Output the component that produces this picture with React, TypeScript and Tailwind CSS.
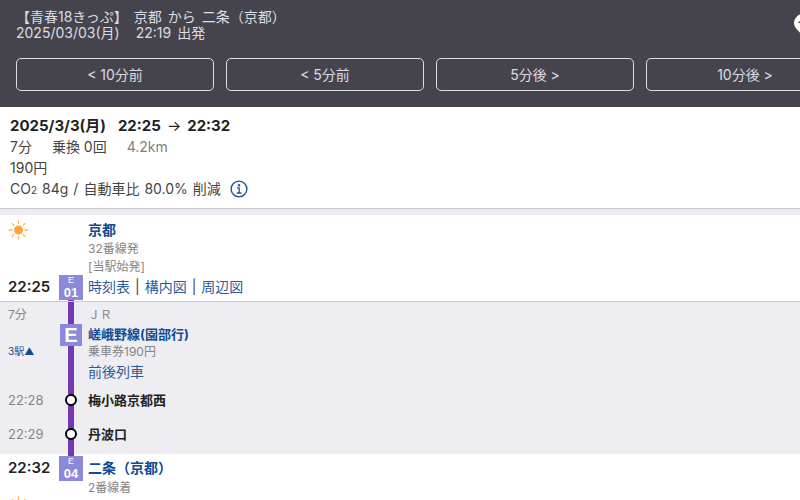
import type { FC, ReactNode } from "react";

const SHIFTS = ["< 10分前", "< 5分前", "5分後 >", "10分後 >"];

const STOPS = [
  { time: "22:28", name: "梅小路京都西" },
  { time: "22:29", name: "丹波口" },
];

const STATION_LINKS = ["時刻表", "構内図", "周辺図"];

const SunIcon: FC = () => (
  <svg viewBox="0 0 20 20" className="size-5" aria-hidden="true">
    <circle cx="10.5" cy="10" r="4.5" fill="#f9a63a" />
    <g stroke="#f9b45c" strokeWidth="1.3" strokeLinecap="round">
      <path d="M10.5 1v2.4M10.5 16.600V19M1.500 10h2.400M17.100 10h2.400M4.100 3.600l1.700 1.700M15.200 14.700l1.700 1.700M4.100 16.400l1.700-1.700M15.200 5.300l1.700-1.700" />
    </g>
  </svg>
);

const InfoIcon: FC = () => (
  <svg viewBox="0 0 18 18" className="size-[18px]" aria-hidden="true">
    <circle cx="9" cy="9" r="7.9" fill="none" stroke="#1f5296" strokeWidth="1.4" />
    <circle cx="9" cy="5.2" r="1.2" fill="#1f5296" />
    <path d="M7 7.9h2.2v5M6.800 13h4.600" fill="none" stroke="#1f5296" strokeWidth="1.3" />
  </svg>
);

const PinIcon: FC = () => (
  <svg viewBox="0 0 18 22" className="h-[22px] w-[18px]" aria-hidden="true">
    <path d="M9 0a9 9 0 0 0-9 9c0 5 5.500 8.500 9 13 3.500-4.500 9-8 9-13a9 9 0 0 0-9-9z" fill="#fff" />
    <path d="M4.500 8.200h9M9 4v9" stroke="#44434b" strokeWidth="1.500" />
  </svg>
);

const StationBadge: FC<{ number: string }> = ({ number }) => (
  <div className="relative flex h-[25px] w-6 flex-col items-center bg-[#8b89d9] font-['Liberation_Sans',sans-serif] text-white">
    <span className="text-[9px] leading-[11px]">E</span>
    <span className="text-[13px] leading-[14px] font-bold">{number}</span>
  </div>
);

// One line of the timetable: time, rail, description
const Row: FC<{ time: ReactNode; rail: ReactNode; children: ReactNode }> = ({
  time,
  rail,
  children,
}) => (
  <div className="grid grid-cols-[51px_24px_1fr] pl-2">
    <div className="flex flex-col">{time}</div>
    <div className="relative flex flex-col items-center">{rail}</div>
    <div className="pl-[5px]">{children}</div>
  </div>
);

const Line: FC = () => (
  <div className="absolute inset-y-0 left-1/2 w-1.5 -translate-x-1/2 bg-[#7439b1]" />
);

export default function App() {
  return (
    <div className="h-screen overflow-hidden bg-white font-[Inter,'Noto_Sans_CJK_JP',sans-serif] text-sm text-[#444]">
      <header className="relative overflow-hidden bg-[#45444c] px-4 pt-[9px] pb-4 text-[#dddce3]">
        <h1 className="flex gap-1.5 leading-4">
          <span>【青春18きっぷ】</span>
          <span>京都</span>
          <span>から</span>
          <span>二条（京都）</span>
        </h1>
        <p className="flex gap-4 leading-4">
          <span>2025/03/03(月)</span>
          <span className="flex gap-1.5">
            <span>22:19</span>
            <span>出発</span>
          </span>
        </p>
        <button type="button" aria-label="地図" className="absolute top-3.5 -right-3">
          <PinIcon />
        </button>
        <div className="mt-[17px] flex gap-3">
          {SHIFTS.map((label) => (
            <button
              key={label}
              type="button"
              className="h-[33px] min-w-[198px] shrink-0 rounded-[5px] border border-[#dddce4]"
            >
              {label}
            </button>
          ))}
        </div>
      </header>

      <section className="border-b border-[#c8c8cc] px-2.5 py-2 leading-[21px]">
        <h2 className="flex gap-3 text-[15px] font-bold text-[#222]">
          <span>2025/3/3(月)</span>
          <span className="flex gap-1.5">
            <span>22:25</span>
            <span className="font-normal">→</span>
            <span>22:32</span>
          </span>
        </h2>
        <p className="flex gap-5">
          <span>7分</span>
          <span>乗換 0回</span>
          <span className="text-[#808080]">4.2km</span>
        </p>
        <p>190円</p>
        <p className="flex items-baseline gap-[5px] leading-[22px]">
          <span>
            CO<span className="text-[10px] leading-none">2</span>
          </span>
          <span>84g</span>
          <span>/</span>
          <span>自動車比</span>
          <span>80.0%</span>
          <span>削減</span>
          <button type="button" aria-label="CO2排出量について" className="ml-1 self-center">
            <InfoIcon />
          </button>
        </p>
      </section>
      <div className="h-1.5 bg-[#eeedf2]" />

      <section className="border-b border-[#c8c8cc]">
        <Row
          time={
            <>
              <div className="pt-[5px]">
                <SunIcon />
              </div>
              <span className="mt-auto pb-1 text-[15px] leading-5 font-semibold text-[#222]">
                22:25
              </span>
            </>
          }
          rail={
            <>
              <div className="absolute bottom-0 h-1 w-1.5 bg-[#7439b1]" />
              <div className="mt-auto pb-px">
                <StationBadge number="01" />
              </div>
            </>
          }
        >
          <div className="pt-[5px] pb-1">
            <a href="#kyoto" className="block leading-5 font-bold text-[#0f4c92]">
              京都
            </a>
            <p className="text-xs leading-[18px] text-[#858585]">32番線発</p>
            <p className="text-xs leading-[18px] text-[#858585]">[当駅始発]</p>
            <p className="flex gap-[5px] leading-[21px]">
              {STATION_LINKS.map((label, i) => (
                <span key={label} className="flex gap-[5px]">
                  {i > 0 && <span>|</span>}
                  <a href="#station" className="text-[#2a5b9b]">
                    {label}
                  </a>
                </span>
              ))}
            </p>
          </div>
        </Row>
      </section>

      <section className="bg-[#eeedf2]">
        <Row
          time={
            <div className="flex flex-col items-start gap-[18px] pt-1 text-xs leading-[18px] text-[#858585]">
              <span>7分</span>
              <button type="button" className="text-[10px] text-[#0f4c92]">
                3駅▲
              </button>
            </div>
          }
          rail={
            <>
              <Line />
              <div className="relative mt-[22px] flex size-[22px] items-center justify-center bg-[#8b89d9] font-['Liberation_Sans',sans-serif] text-xl leading-5 font-bold text-white">
                E
              </div>
            </>
          }
        >
          <div className="pt-1">
            <p className="text-xs leading-[18px] text-[#858585]">ＪＲ</p>
            <a href="#line" className="block text-[13px] leading-5 font-bold text-[#0f4c92]">
              嵯峨野線(園部行)
            </a>
            <p className="text-xs leading-4 text-[#858585]">乗車券190円</p>
            <a href="#trains" className="block leading-[23px] text-[#2a5b9b]">
              前後列車
            </a>
          </div>
        </Row>
        {STOPS.map((stop) => (
          <Row
            key={stop.name}
            time={<span className="text-[13px] leading-[34px] text-[#858585]">{stop.time}</span>}
            rail={
              <>
                <Line />
                <div className="relative my-auto size-3 rounded-full border-2 border-black bg-white" />
              </>
            }
          >
            <span className="block text-[13px] leading-[34px] font-bold text-[#222]">
              {stop.name}
            </span>
          </Row>
        ))}
        <Row time={null} rail={<Line />}>
          <div className="h-[3px]" />
        </Row>
      </section>

      <section>
        <Row
          time={
            <>
              <span className="pt-1 text-[15px] leading-5 font-semibold text-[#222]">22:32</span>
              <div className="pt-[18px]">
                <SunIcon />
              </div>
            </>
          }
          rail={
            <>
              <div className="absolute top-0 h-1 w-1.5 bg-[#7439b1]" />
              <div className="pt-0.5">
                <StationBadge number="04" />
              </div>
            </>
          }
        >
          <div className="pt-1">
            <a href="#nijo" className="block leading-5 font-bold text-[#0f4c92]">
              二条（京都）
            </a>
            <p className="text-xs leading-5 text-[#858585]">2番線着</p>
          </div>
        </Row>
      </section>
    </div>
  );
}
